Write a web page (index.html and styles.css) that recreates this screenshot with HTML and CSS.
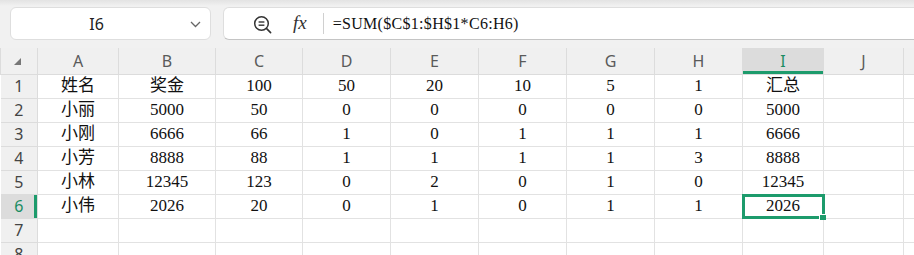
FILE: index.html
```html
<!DOCTYPE html>
<html lang="zh">
<head>
    <meta charset="UTF-8">
    <meta name="viewport" content="width=device-width, initial-scale=1.0">
    <title>工作表</title>
    <link rel="stylesheet" href="styles.css">
</head>
<body>

<div class="toolbar">
    <div class="namebox">
        <span class="cell-ref">I6</span>
        <svg class="chevron" width="11" height="7" viewBox="0 0 11 7">
            <polyline points="1,1 5.5,5.5 10,1" fill="none" stroke="#666" stroke-width="1.3"/>
        </svg>
    </div>
    <div class="formula">
        <svg class="zoom-icon" width="19" height="19" viewBox="0 0 19 19">
            <circle cx="8.5" cy="8.5" r="6.8" fill="none" stroke="#333" stroke-width="1.5"/>
            <line x1="5.6" y1="7" x2="11.4" y2="7" stroke="#333" stroke-width="1.4"/>
            <line x1="5.6" y1="10.2" x2="11.4" y2="10.2" stroke="#333" stroke-width="1.4"/>
            <line x1="13.4" y1="13.4" x2="17.6" y2="17.6" stroke="#333" stroke-width="1.6" stroke-linecap="round"/>
        </svg>
        <span class="fx">fx</span>
        <div class="sep"></div>
        <span class="formula-text">=SUM($C$1:$H$1*C6:H6)</span>
    </div>
</div>

<table class="sheet">
    <colgroup>
        <col class="c-row"><col class="c-a"><col class="c-b"><col class="c-c"><col class="c-n"><col class="c-n">
        <col class="c-n"><col class="c-n"><col class="c-n"><col class="c-i"><col class="c-j"><col class="c-k">
    </colgroup>
    <thead>
        <tr>
            <th class="corner"><span class="tri"></span></th>
            <th>A</th><th>B</th><th>C</th><th>D</th><th>E</th><th>F</th><th>G</th><th>H</th>
            <th class="sel-col">I</th><th>J</th><th></th>
        </tr>
    </thead>
    <tbody>
        <tr><th>1</th><td>姓名</td><td>奖金</td><td>100</td><td>50</td><td>20</td><td>10</td><td>5</td><td>1</td><td>汇总</td><td></td><td></td></tr>
        <tr><th>2</th><td>小丽</td><td>5000</td><td>50</td><td>0</td><td>0</td><td>0</td><td>0</td><td>0</td><td>5000</td><td></td><td></td></tr>
        <tr><th>3</th><td>小刚</td><td>6666</td><td>66</td><td>1</td><td>0</td><td>1</td><td>1</td><td>1</td><td>6666</td><td></td><td></td></tr>
        <tr><th>4</th><td>小芳</td><td>8888</td><td>88</td><td>1</td><td>1</td><td>1</td><td>1</td><td>3</td><td>8888</td><td></td><td></td></tr>
        <tr><th>5</th><td>小林</td><td>12345</td><td>123</td><td>0</td><td>2</td><td>0</td><td>1</td><td>0</td><td>12345</td><td></td><td></td></tr>
        <tr><th class="sel-row">6</th><td>小伟</td><td>2026</td><td>20</td><td>0</td><td>1</td><td>0</td><td>1</td><td>1</td><td class="active">2026</td><td></td><td></td></tr>
        <tr><th>7</th><td></td><td></td><td></td><td></td><td></td><td></td><td></td><td></td><td></td><td></td><td></td></tr>
        <tr><th>8</th><td></td><td></td><td></td><td></td><td></td><td></td><td></td><td></td><td></td><td></td><td></td></tr>
    </tbody>
</table>

</body>
</html>
```

FILE: styles.css
```css
body {
    margin: 0;
    background: #fff;
    overflow: hidden;
    font-family: "Noto Sans", "Liberation Sans", sans-serif;
}
.toolbar {
    height: 48px;
    box-sizing: border-box;
    padding: 7px 0 0 10px;
    display: flex;
    gap: 12px;
    background: linear-gradient(#e3e3e3 0, #f1f1f1 6px, #f1f1f1 100%);
}
.namebox {
    width: 201px;
    height: 33px;
    box-sizing: border-box;
    background: white;
    border: 1px solid #dedede;
    border-radius: 6px;
    display: flex;
    align-items: center;
    position: relative;
}
.cell-ref {
    flex: 1;
    text-align: center;
    font-size: 16px;
    color: #222;
    padding-right: 28px;
}
.chevron {
    position: absolute;
    right: 9px;
    top: 13px;
}
.formula {
    flex: 1;
    height: 33px;
    box-sizing: border-box;
    margin-right: -12px;
    background: white;
    border: 1px solid #dedede;
    border-bottom-color: #c4c4c4;
    border-radius: 6px 0 0 6px;
    display: flex;
    align-items: center;
    padding-left: 29px;
}
.zoom-icon {
    margin-top: 1px;
}
.fx {
    font-family: "Liberation Serif", serif;
    font-style: italic;
    font-size: 19px;
    color: #333;
    margin-left: 21px;
    margin-top: -2px;
}
.sep {
    width: 1px;
    height: 21px;
    background: #d0d0d0;
    margin-left: 16px;
}
.formula-text {
    font-family: "Liberation Serif", serif;
    font-size: 16px;
    letter-spacing: 0.3px;
    color: #111;
    margin-left: 9px;
}
.sheet {
    border-collapse: collapse;
    table-layout: fixed;
    width: 1000px;
}
.c-row { width: 37px; }
.c-a { width: 81px; }
.c-b { width: 97px; }
.c-c { width: 87px; }
.c-n { width: 88px; }
.c-i { width: 81px; }
.c-j { width: 80px; }
.c-k { width: 100px; }
.sheet tr {
    height: 24px;
}
.sheet thead tr {
    height: 26px;
}
.sheet th {
    background: #f0f0f0;
    font-weight: normal;
    font-size: 16px;
    color: #555;
    border: 1px solid #dcdcdc;
    padding: 0;
    text-align: center;
}
.sheet thead th {
    border-top: none;
    color: #5a5a5a;
}
.sheet tbody th {
    color: #444;
    border-left: none;
}
.sheet td {
    border: 1px solid #e2e2e2;
    padding: 0;
    text-align: center;
    font-family: "Liberation Serif", "Noto Sans CJK SC", serif;
    font-size: 17px;
    color: #111;
    line-height: 20px;
}
.corner {
    position: relative;
}
.tri {
    position: absolute;
    left: 13px;
    top: 10px;
    width: 0;
    height: 0;
    border-left: 7px solid transparent;
    border-bottom: 7px solid #777;
}
.sheet th.sel-col {
    background: #dcdcdc;
    color: #1a8c62;
    box-shadow: inset 0 -3px 0 #1d9b6c;
}
.sheet th.sel-row {
    background: #dcdcdc;
    color: #1a8c62;
    box-shadow: inset -3px 0 0 #1d9b6c;
}
.active {
    position: relative;
}
.active::after {
    content: "";
    position: absolute;
    left: -1px;
    top: -1px;
    right: -2px;
    bottom: -1px;
    border: 3px solid #1d9b6c;
}
.active::before {
    content: "";
    position: absolute;
    right: -3px;
    bottom: -2px;
    width: 6px;
    height: 5px;
    background: #1d9b6c;
    border-left: 1px solid white;
    border-top: 1px solid white;
    z-index: 1;
}
```
